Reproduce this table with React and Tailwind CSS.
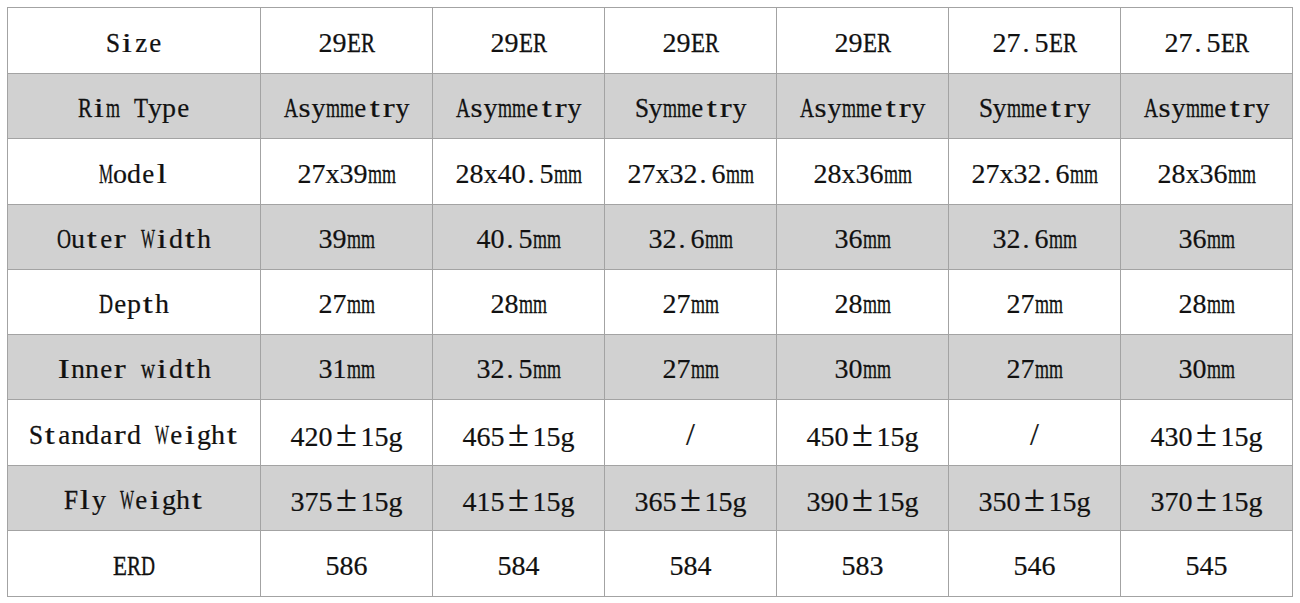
import React from "react";

const rows = [
  ["Size", "29ER", "29ER", "29ER", "29ER", "27.5ER", "27.5ER"],
  ["Rim Type", "Asymmetry", "Asymmetry", "Symmetry", "Asymmetry", "Symmetry", "Asymmetry"],
  ["Model", "27x39mm", "28x40.5mm", "27x32.6mm", "28x36mm", "27x32.6mm", "28x36mm"],
  ["Outer Width", "39mm", "40.5mm", "32.6mm", "36mm", "32.6mm", "36mm"],
  ["Depth", "27mm", "28mm", "27mm", "28mm", "27mm", "28mm"],
  ["Inner width", "31mm", "32.5mm", "27mm", "30mm", "27mm", "30mm"],
  ["Standard Weight", "420±15g", "465±15g", "/", "450±15g", "/", "430±15g"],
  ["Fly Weight", "375±15g", "415±15g", "365±15g", "390±15g", "350±15g", "370±15g"],
  ["ERD", "586", "584", "584", "583", "546", "545"],
];

// Liberation Serif advance widths (em) of glyphs wider than half an em
const wide = {
  m: 0.778, w: 0.722, W: 0.944, M: 0.889, A: 0.722, S: 0.556, R: 0.667,
  E: 0.611, T: 0.611, O: 0.722, D: 0.722, F: 0.556,
};
// narrow lowercase glyphs, widened a little to fill the half-em cell
const narrow = {
  a: 0.444, c: 0.444, e: 0.444, f: 0.333, i: 0.278, l: 0.278, r: 0.333,
  s: 0.389, t: 0.278, z: 0.444, I: 0.333,
};

function Ch({ c }) {
  if (c === "±") {
    return (
      <span className="inline-block w-[28px] text-center text-[38px] leading-[28px]">±</span>
    );
  }
  if (c === "/") {
    return (
      <span className="inline-block w-[14px] text-center text-[32px] leading-[28px]">/</span>
    );
  }
  if (c === ".") {
    return <span className="inline-block w-[14px] pl-[2px] text-left">.</span>;
  }
  if (c === " ") {
    return <span className="inline-block w-[14px] whitespace-pre"> </span>;
  }
  const w = (wide[c] || 0) * 28;
  if (w > 14.5) {
    const k = 14 / w;
    return (
      <span
        className="inline-block origin-left [-webkit-text-stroke:0.35px_#111]"
        style={{ width: w, marginRight: 14 - w, transform: `scaleX(${k.toFixed(3)})` }}
      >
        {c}
      </span>
    );
  }
  const n = (narrow[c] || 0) * 28;
  if (n > 0) {
    const k = Math.min(1.3, 12 / n);
    return (
      <span className="inline-block w-[14px] text-center">
        <span className="inline-block" style={{ transform: `scaleX(${k.toFixed(3)})` }}>
          {c}
        </span>
      </span>
    );
  }
  return <span className="inline-block w-[14px] text-center">{c}</span>;
}

function Txt({ s }) {
  return (
    <span className="whitespace-nowrap font-['Liberation_Serif',serif] text-[28px] leading-none text-[#111] [-webkit-text-stroke:0.2px_#111]">
      {Array.from(s).map((c, i) => (
        <Ch key={i} c={c} />
      ))}
    </span>
  );
}

export default function App() {
  return (
    <div className="w-[1300px] h-[603px] bg-white pt-[7px] pl-[7px]">
      <div className="grid w-[1286px] grid-cols-[253px_repeat(6,172px)] grid-rows-[66px_65px_66px_65px_65px_65px_66px_65px_66px] border-l border-t border-[#a3a3a3]">
        {rows.map((r, ri) =>
          r.map((c, ci) => (
            <div
              key={ri + "-" + ci}
              className={
                "flex items-center justify-center border-r border-b border-[#a3a3a3] pt-[4px] " +
                (ri % 2 === 1 ? "bg-[#d1d1d1]" : "bg-white")
              }
            >
              <Txt s={c} />
            </div>
          ))
        )}
      </div>
    </div>
  );
}
